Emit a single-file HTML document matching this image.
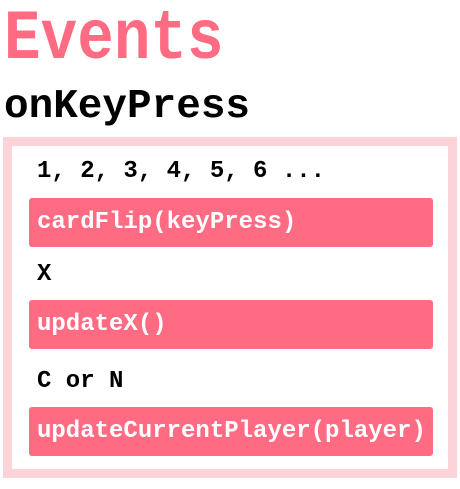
<!DOCTYPE html>
<html><head><style>
body{margin:0;width:460px;height:489px;background:#fff;position:relative;overflow:hidden;font-family:"Liberation Mono",monospace;font-weight:bold}
.t{position:absolute;white-space:nowrap;line-height:1}
.box{position:absolute;left:29px;width:404px;height:49px;background:#ff6b83;border-radius:3px}
</style></head><body>
<div class="t" style="left:4px;top:5px;font-size:61px;color:#ff6b83;transform:scaleY(1.15);transform-origin:0 0">Events</div>
<div class="t" style="left:4px;top:87px;font-size:41px;color:#000">onKeyPress</div>
<div style="position:absolute;left:3px;top:137px;width:436px;height:323px;border:9px solid #fdd3da"></div>
<div class="t" style="left:37px;top:160px;font-size:24px;color:#000">1, 2, 3, 4, 5, 6 ...</div>
<div class="box" style="top:198px"></div>
<div class="t" style="left:37px;top:211px;font-size:24px;color:#fff">cardFlip(keyPress)</div>
<div class="t" style="left:37px;top:263px;font-size:24px;color:#000">X</div>
<div class="box" style="top:300px"></div>
<div class="t" style="left:37px;top:313px;font-size:24px;color:#fff">updateX()</div>
<div class="t" style="left:37px;top:370px;font-size:24px;color:#000">C or N</div>
<div class="box" style="top:407px"></div>
<div class="t" style="left:37px;top:420px;font-size:24px;color:#fff">updateCurrentPlayer(player)</div>
</body></html>
